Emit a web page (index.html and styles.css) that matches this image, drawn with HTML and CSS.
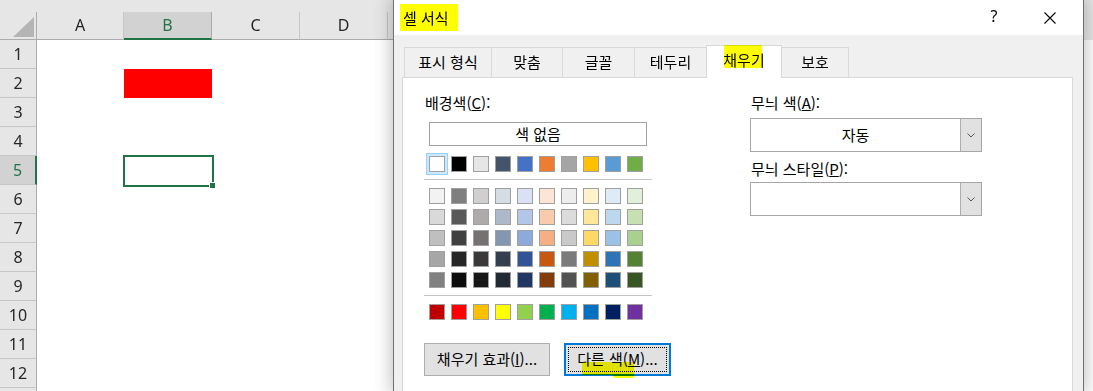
FILE: index.html
```html
<!DOCTYPE html>
<html lang="ko">
<head>
<meta charset="utf-8">
<title>셀 서식</title>
<link rel="stylesheet" href="styles.css">
</head>
<body>
<div class="sheet">
  <div class="topstrip"></div>
  <div class="hdr">
    <div class="corner"><span class="tri"></span></div>
    <div class="colh cola">A</div>
    <div class="colh sel">B</div>
    <div class="colh">C</div>
    <div class="colh">D</div>
    <div class="colh">E</div>
    <div class="colh">F</div>
  </div>
  <div class="row"><div class="rowh">1</div><div class="cell ca"></div><div class="cell"></div></div>
  <div class="row"><div class="rowh">2</div><div class="cell ca"></div><div class="cell red"></div></div>
  <div class="row"><div class="rowh">3</div><div class="cell ca"></div><div class="cell"></div></div>
  <div class="row"><div class="rowh">4</div><div class="cell ca"></div><div class="cell"></div></div>
  <div class="row"><div class="rowh sel">5</div><div class="cell ca"></div><div class="cell active"><span class="selbox"></span><span class="handle"></span></div></div>
  <div class="row"><div class="rowh">6</div></div>
  <div class="row"><div class="rowh">7</div></div>
  <div class="row"><div class="rowh">8</div></div>
  <div class="row"><div class="rowh">9</div></div>
  <div class="row"><div class="rowh">10</div></div>
  <div class="row"><div class="rowh">11</div></div>
  <div class="row"><div class="rowh">12</div></div>
  <div class="row last"><div class="rowh"></div></div>
</div>

<div class="dialog">
  <div class="titlebar">
    <span class="title">셀 서식<span class="hl hl-title"></span></span>
    <div class="caption">
      <span class="help">?</span>
      <span class="close"><svg width="12" height="12" viewBox="0 0 12 12"><path d="M0.5 0.5 L11.5 11.5 M11.5 0.5 L0.5 11.5" stroke="#000" stroke-width="1.1" fill="none"/></svg></span>
    </div>
  </div>
  <div class="dbody">
    <div class="tabs">
      <div class="tab t1">표시 형식</div>
      <div class="tab t2">맞춤</div>
      <div class="tab t3">글꼴</div>
      <div class="tab t4">테두리</div>
      <div class="tab active">채우기<span class="hl hl-tab"></span></div>
      <div class="tab t6">보호</div>
    </div>
    <div class="panel">
      <div class="left">
        <div class="label">배경색(<u>C</u>):</div>
        <div class="nocolor">색 없음</div>
        <div class="swrow first">
          <span class="sw picked" style="background:#ffffff"></span>
          <span class="sw" style="background:#000000"></span>
          <span class="sw" style="background:#e7e6e6"></span>
          <span class="sw" style="background:#44546a"></span>
          <span class="sw" style="background:#4472c4"></span>
          <span class="sw" style="background:#ed7d31"></span>
          <span class="sw" style="background:#a5a5a5"></span>
          <span class="sw" style="background:#ffc000"></span>
          <span class="sw" style="background:#5b9bd5"></span>
          <span class="sw" style="background:#70ad47"></span>
        </div>
        <div class="sep"></div>
        <div class="tints">
          <div class="swrow">
            <span class="sw" style="background:#f2f2f2"></span>
            <span class="sw" style="background:#7f7f7f"></span>
            <span class="sw" style="background:#d0cece"></span>
            <span class="sw" style="background:#d6dce4"></span>
            <span class="sw" style="background:#d9e1f2"></span>
            <span class="sw" style="background:#fce4d6"></span>
            <span class="sw" style="background:#ededed"></span>
            <span class="sw" style="background:#fff2cc"></span>
            <span class="sw" style="background:#ddebf7"></span>
            <span class="sw" style="background:#e2efda"></span>
          </div>
          <div class="swrow">
            <span class="sw" style="background:#d9d9d9"></span>
            <span class="sw" style="background:#595959"></span>
            <span class="sw" style="background:#aeaaaa"></span>
            <span class="sw" style="background:#adb9ca"></span>
            <span class="sw" style="background:#b4c6e7"></span>
            <span class="sw" style="background:#f8cbad"></span>
            <span class="sw" style="background:#dbdbdb"></span>
            <span class="sw" style="background:#ffe699"></span>
            <span class="sw" style="background:#bdd7ee"></span>
            <span class="sw" style="background:#c6e0b4"></span>
          </div>
          <div class="swrow">
            <span class="sw" style="background:#bfbfbf"></span>
            <span class="sw" style="background:#404040"></span>
            <span class="sw" style="background:#757171"></span>
            <span class="sw" style="background:#8497b0"></span>
            <span class="sw" style="background:#8ea9db"></span>
            <span class="sw" style="background:#f4b084"></span>
            <span class="sw" style="background:#c9c9c9"></span>
            <span class="sw" style="background:#ffd966"></span>
            <span class="sw" style="background:#9bc2e6"></span>
            <span class="sw" style="background:#a9d08e"></span>
          </div>
          <div class="swrow">
            <span class="sw" style="background:#a6a6a6"></span>
            <span class="sw" style="background:#262626"></span>
            <span class="sw" style="background:#3a3838"></span>
            <span class="sw" style="background:#333f4f"></span>
            <span class="sw" style="background:#305496"></span>
            <span class="sw" style="background:#c65911"></span>
            <span class="sw" style="background:#7b7b7b"></span>
            <span class="sw" style="background:#bf8f00"></span>
            <span class="sw" style="background:#2f75b5"></span>
            <span class="sw" style="background:#548235"></span>
          </div>
          <div class="swrow">
            <span class="sw" style="background:#808080"></span>
            <span class="sw" style="background:#0d0d0d"></span>
            <span class="sw" style="background:#161616"></span>
            <span class="sw" style="background:#222b35"></span>
            <span class="sw" style="background:#203764"></span>
            <span class="sw" style="background:#833c0c"></span>
            <span class="sw" style="background:#525252"></span>
            <span class="sw" style="background:#806000"></span>
            <span class="sw" style="background:#1f4e78"></span>
            <span class="sw" style="background:#375623"></span>
          </div>
        </div>
        <div class="sep"></div>
        <div class="swrow std">
          <span class="sw" style="background:#c00000"></span>
          <span class="sw" style="background:#ff0000"></span>
          <span class="sw" style="background:#ffc000"></span>
          <span class="sw" style="background:#ffff00"></span>
          <span class="sw" style="background:#92d050"></span>
          <span class="sw" style="background:#00b050"></span>
          <span class="sw" style="background:#00b0f0"></span>
          <span class="sw" style="background:#0070c0"></span>
          <span class="sw" style="background:#002060"></span>
          <span class="sw" style="background:#7030a0"></span>
        </div>
        <div class="buttons">
          <div class="btn b1">채우기 효과(<u>I</u>)...</div>
          <div class="btn b2 focused"><span class="focusring">다른 색(<u>M</u>)...</span><span class="hl hl-btn"></span></div>
        </div>
      </div>
      <div class="right">
        <div class="label">무늬 색(<u>A</u>):</div>
        <div class="combo c1"><span class="cval">자동</span><span class="drop"><svg width="8" height="5" viewBox="0 0 8 5"><path d="M0.5 0.5 L4 4 L7.5 0.5" stroke="#555" stroke-width="1" fill="none"/></svg></span></div>
        <div class="label l2">무늬 스타일(<u>P</u>):</div>
        <div class="combo c2"><span class="cval"></span><span class="drop"><svg width="8" height="5" viewBox="0 0 8 5"><path d="M0.5 0.5 L4 4 L7.5 0.5" stroke="#555" stroke-width="1" fill="none"/></svg></span></div>
      </div>
    </div>
  </div>
</div>
</body>
</html>
```

FILE: styles.css
```css
* { box-sizing: border-box; }
html, body { margin: 0; padding: 0; }
body {
  width: 1093px;
  height: 391px;
  overflow: hidden;
  position: relative;
  background: #ffffff;
  font-family: "Noto Sans", "Noto Sans CJK KR", sans-serif;
}

/* ---------- spreadsheet ---------- */
.sheet { width: 1093px; height: 391px; overflow: hidden; }
.topstrip { height: 12px; background: #e6e6e6; }
.hdr { display: flex; height: 28px; background: #e6e6e6; }
.corner {
  position: relative;
  width: 37px;
  flex: none;
  border-right: 1px solid #ababab;
  border-bottom: 1px solid #ababab;
}
.tri {
  position: absolute;
  right: 2px;
  bottom: 2px;
  width: 21px;
  height: 20px;
  background: #b4b4b4;
  clip-path: polygon(100% 0, 100% 100%, 0 100%);
}
.colh {
  width: 88px;
  flex: none;
  border-right: 1px solid #c6c6c6;
  border-bottom: 1px solid #ababab;
  text-align: center;
  font-size: 16px;
  line-height: 27px;
  color: #262626;
}
.colh.cola { width: 87px; }
.colh.sel {
  background: #d2d2d2;
  color: #217346;
  border-bottom: 2px solid #217346;
  border-right-color: #ababab;
}
.row { display: flex; height: 29px; }
.row.last { height: 3px; }
.rowh {
  width: 37px;
  flex: none;
  background: #e6e6e6;
  border-right: 1px solid #ababab;
  border-bottom: 1px solid #c6c6c6;
  text-align: center;
  font-size: 16px;
  line-height: 28px;
  color: #262626;
}
.row.last .rowh { border-bottom: none; }
.rowh.sel {
  background: #d2d2d2;
  color: #217346;
  border-right: 2px solid #217346;
}
.cell { width: 88px; flex: none; position: relative; }
.cell.ca { width: 87px; }
.cell.red { background: #ff0000; }
.selbox {
  position: absolute;
  left: -1px;
  top: -1px;
  width: 91px;
  height: 32px;
  border: 2px solid #217346;
}
.handle {
  position: absolute;
  left: 85px;
  top: 26px;
  width: 7px;
  height: 7px;
  background: #217346;
  border: 1px solid #ffffff;
}

/* ---------- dialog ---------- */
.dialog {
  position: absolute;
  left: 393px;
  top: 0;
  width: 691px;
  height: 391px;
  overflow: hidden;
  background: #f0f0f0;
  border-left: 1px solid #707070;
  border-right: 1px solid #707070;
  box-shadow: 0 0 16px 3px rgba(0, 0, 0, 0.22);
  font-family: "Noto Sans CJK KR", "Noto Sans", sans-serif;
  color: #000;
}
.hl {
  position: absolute;
  background: #ffff00;
  mix-blend-mode: multiply;
  pointer-events: none;
}
.titlebar {
  height: 35px;
  background: #ffffff;
  display: flex;
  align-items: center;
  justify-content: space-between;
}
.title {
  position: relative;
  margin-left: 9px;
  font-size: 15px;
  line-height: 20px;
}
.hl-title { left: -3px; top: -4px; width: 58px; height: 27px; }
.caption { display: flex; height: 35px; }
.help {
  width: 46px;
  text-align: center;
  font-family: "Noto Sans", sans-serif;
  font-size: 16px;
  line-height: 33px;
}
.close {
  width: 66px;
  display: flex;
  align-items: center;
  justify-content: center;
}

.dbody { padding: 10px 10px 0 8px; }
.tabs { display: flex; align-items: flex-end; height: 32px; margin-left: 2px; }
.tab {
  position: relative;
  flex: none;
  height: 30px;
  border: 1px solid #d9d9d9;
  border-bottom: none;
  background: #f0f0f0;
  text-align: center;
  font-size: 15px;
  line-height: 27px;
  margin-left: -1px;
}
.tab.t1 { width: 88px; margin-left: 0; }
.tab.t2 { width: 72px; }
.tab.t3 { width: 73px; }
.tab.t4 { width: 73px; }
.tab.active {
  width: 76px;
  height: 33px;
  margin-bottom: -1px;
  background: #ffffff;
  z-index: 2;
  line-height: 28px;
}
.tab.t6 { width: 68px; }
.hl-tab { left: 17px; top: -1px; width: 38px; height: 23px; }

.panel {
  position: relative;
  width: 671px;
  height: 320px;
  background: #ffffff;
  border: 1px solid #d9d9d9;
  display: flex;
  padding: 15px 0 0 21px;
}
.label { font-size: 15px; line-height: 20px; margin-left: 1px; white-space: nowrap; }
.left { width: 228px; flex: none; }
.nocolor {
  margin: 9px 0 0 5px;
  width: 218px;
  height: 24px;
  border: 1px solid #a0a0a0;
  text-align: center;
  font-size: 15px;
  line-height: 21px;
}
.swrow { display: flex; gap: 6px; margin-left: 5px; }
.swrow.first { margin-top: 10px; }
.sw {
  flex: none;
  width: 16px;
  height: 16px;
  border: 1px solid #a0a0a0;
}
.sw.picked { box-shadow: 0 0 0 2px #cce8ff, 0 0 0 3px #99d1ff; }
.sep { height: 1px; background: #c4c4c4; margin-top: 7px; }
.tints { display: flex; flex-direction: column; gap: 5px; margin-top: 8px; }
.swrow.std { margin-top: 8px; }
.buttons { display: flex; gap: 14px; margin-top: 23px; }
.btn {
  position: relative;
  flex: none;
  height: 33px;
  background: #e1e1e1;
  border: 1px solid #adadad;
  font-size: 15px;
  line-height: 30px;
  text-align: center;
  white-space: nowrap;
}
.btn.b1 { width: 126px; }
.btn.b2 {
  width: 107px;
  border: 2px solid #0078d7;
  padding: 2px;
}
.focusring {
  display: block;
  height: 25px;
  border: 1px dotted #000;
  line-height: 22px;
}
.hl-btn {
  left: 16px;
  top: 17px;
  width: 52px;
  height: 16px;
  clip-path: polygon(0 0, 100% 0, 100% 100%, 60% 100%, 60% 81%, 0 81%);
}

.right { margin-left: 98px; width: 232px; flex: none; }
.combo {
  position: relative;
  display: flex;
  margin-top: 5px;
  width: 232px;
  height: 34px;
  border: 1px solid #a6a6a6;
  background: #ffffff;
}
.cval {
  flex: 1;
  text-align: center;
  font-size: 15px;
  line-height: 31px;
}
.drop {
  width: 21px;
  background: #e1e1e1;
  border-left: 1px solid #adadad;
  display: flex;
  align-items: center;
  justify-content: center;
}
.label.l2 { margin-top: 7px; }
.combo.c2 { margin-top: 3px; }
```
